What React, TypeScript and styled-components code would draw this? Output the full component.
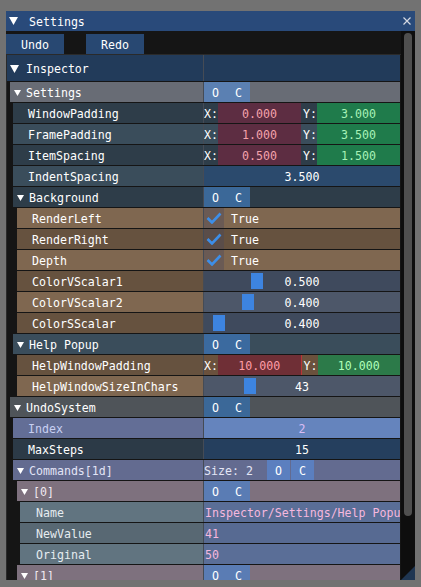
import React from "react";
import styled, { createGlobalStyle } from "styled-components";

const Global = createGlobalStyle`
  *, *::before, *::after { box-sizing: border-box; }
  html, body { margin: 0; padding: 0; background: #727272; }
  body {
    font-family: "DejaVu Sans Mono", "Liberation Mono", monospace;
    font-size: 11.6px;
    color: #ffffff;
  }
  #root { width: 421px; height: 587px; overflow: hidden; }
`;

const Page = styled.div`
  width: 421px;
  height: 587px;
  padding: 11px 6px 7px 6px;
`;

const Window = styled.div`
  position: relative;
  width: 409px;
  height: 569px;
  display: flex;
  flex-direction: column;
  background: #151515;
  overflow: hidden;
`;

const TitleBar = styled.div`
  flex: none;
  height: 20px;
  display: flex;
  align-items: center;
  padding-left: 3px;
  background: #294a7a;
`;

const TitleText = styled.span`
  line-height: 20px;
  padding-top: 1px;
`;

const CloseIcon = styled.svg`
  margin-left: auto;
  margin-right: 4px;
  flex: none;
`;

const Body = styled.div`
  flex: 1;
  min-height: 0;
  display: flex;
`;

const Main = styled.div`
  width: 395px;
  flex: none;
  display: flex;
  flex-direction: column;
  padding-top: 3px;
`;

const ButtonBar = styled.div`
  display: flex;
  gap: 22px;
  height: 20px;
  flex: none;
`;

const Btn = styled.div`
  width: 58px;
  height: 20px;
  background: #284872;
  display: flex;
  align-items: center;
  justify-content: center;
  padding-top: 1px;
`;

const Child = styled.div`
  flex: 1;
  min-height: 0;
  overflow: hidden;
  border-top: 1px solid #2a2a2a;
  border-left: 1px solid #2a2a2a;
  padding-right: 1px;
`;

const Table = styled.div`
  display: flex;
  flex-direction: column;
  gap: 1px;
`;

const Row = styled.div<{ $indent: number; $h?: number }>`
  display: flex;
  flex: none;
  height: ${(p) => p.$h ?? 20}px;
  margin-left: ${(p) => p.$indent}px;
`;

const Label = styled.div<{ $bg: string; $fg?: string; $pad: number }>`
  flex: 1;
  min-width: 0;
  display: flex;
  align-items: center;
  padding-left: ${(p) => p.$pad}px;
  padding-top: 1px;
  background: ${(p) => p.$bg};
  color: ${(p) => p.$fg ?? "#ffffff"};
  white-space: nowrap;
  overflow: hidden;
`;

const Divider = styled.div`
  width: 1px;
  flex: none;
  background: #454b55;
`;

const Value = styled.div<{ $bg: string; $fg?: string; $center?: boolean }>`
  position: relative;
  width: 196px;
  flex: none;
  display: flex;
  align-items: center;
  justify-content: ${(p) => (p.$center ? "center" : "flex-start")};
  background: ${(p) => p.$bg};
  color: ${(p) => p.$fg ?? "#ffffff"};
  white-space: nowrap;
  overflow: hidden;
`;

const ValueText = styled.span<{ $left?: number }>`
  position: relative;
  padding-top: 1px;
  margin-left: ${(p) => p.$left ?? 0}px;
`;

const ArrowSvg = styled.svg<{ $gap: number }>`
  flex: none;
  margin-right: ${(p) => p.$gap}px;
  fill: #ffffff;
`;

const MiniGroup = styled.div<{ $gap?: number; $left?: number }>`
  display: flex;
  height: 100%;
  gap: ${(p) => p.$gap ?? 0}px;
  margin-left: ${(p) => p.$left ?? 0}px;
`;

const MiniBtn = styled.div<{ $bg: string }>`
  width: 23px;
  height: 100%;
  display: flex;
  align-items: center;
  justify-content: center;
  padding-top: 1px;
  background: ${(p) => p.$bg};
`;

const SizeText = styled.span`
  width: 63px;
  flex: none;
  padding-top: 1px;
  color: #e4e6f6;
`;

const Axis = styled.span<{ $w: number; $bg: string }>`
  width: ${(p) => p.$w}px;
  height: 100%;
  flex: none;
  display: flex;
  align-items: center;
  justify-content: flex-end;
  padding-top: 1px;
  background: ${(p) => p.$bg};
`;

const NumField = styled.div<{ $bg: string; $fg: string; $edge?: string }>`
  flex: 1;
  height: 100%;
  display: flex;
  align-items: center;
  justify-content: center;
  padding-top: 1px;
  background: ${(p) => p.$bg};
  color: ${(p) => p.$fg};
  border-right: ${(p) => (p.$edge ? `1px solid ${p.$edge}` : "none")};
`;

const CheckBox = styled.div`
  width: 20px;
  height: 100%;
  flex: none;
  display: flex;
  align-items: center;
  justify-content: center;
  background: rgba(70, 70, 92, 0.36);
`;

const TrueText = styled.span`
  margin-left: 7px;
  padding-top: 1px;
`;

const Grab = styled.div<{ $pos: number }>`
  position: absolute;
  top: 2px;
  bottom: 2px;
  left: ${(p) => p.$pos}px;
  width: 12px;
  background: #3d84e0;
`;

const Track = styled.div`
  width: 14px;
  flex: none;
  background: #0e0e0e;
  padding: 2px 0 0 3px;
`;

const Thumb = styled.div`
  width: 8px;
  height: 483px;
  border-radius: 4px;
  background: #4f4f4f;
`;

const Grip = styled.svg`
  position: absolute;
  right: 0;
  bottom: 0;
`;

/* ---------- helpers ---------- */

const Arrow = ({ w, h, gap }: { w: number; h: number; gap: number }) => (
  <ArrowSvg $gap={gap} width={w} height={h} viewBox={`0 0 ${w} ${h}`}>
    <polygon points={`0,0 ${w},0 ${w / 2},${h}`} />
  </ArrowSvg>
);

const Check = () => (
  <CheckBox>
    <svg width="16" height="12" viewBox="0 0 16 12">
      <polyline
        points="1.5,6 6,10.5 14.5,1.5"
        fill="none"
        stroke="#3d8ee8"
        strokeWidth="2.6"
        strokeLinejoin="miter"
      />
    </svg>
  </CheckBox>
);

const OC = ({ bg, gap, left }: { bg: string; gap?: number; left?: number }) => (
  <MiniGroup $gap={gap} $left={left}>
    <MiniBtn $bg={bg}>O</MiniBtn>
    <MiniBtn $bg={bg}>C</MiniBtn>
  </MiniGroup>
);

type HeaderProps = {
  indent: number;
  bg: string;
  text: string;
  btn: string;
  fg?: string;
};

const HeaderRow = ({ indent, bg, text, btn, fg }: HeaderProps) => (
  <Row $indent={indent}>
    <Label $bg={bg} $pad={4} $fg={fg}>
      <Arrow w={7} h={6} gap={5} />
      {text}
    </Label>
    <Divider />
    <Value $bg={bg}>
      <OC bg={btn} />
    </Value>
  </Row>
);

type VecProps = {
  indent: number;
  text: string;
  bg: string;
  axis: string;
  red: string;
  redFg: string;
  green: string;
  greenFg: string;
  x: string;
  y: string;
  edge?: string;
};

const VecRow = (p: VecProps) => (
  <Row $indent={p.indent}>
    <Label $bg={p.bg} $pad={15}>
      {p.text}
    </Label>
    <Divider />
    <Value $bg={p.axis}>
      <Axis $w={14} $bg={p.axis}>X:</Axis>
      <NumField $bg={p.red} $fg={p.redFg} $edge={p.edge}>
        {p.x}
      </NumField>
      <Axis $w={16} $bg={p.axis}>Y:</Axis>
      <NumField $bg={p.green} $fg={p.greenFg}>
        {p.y}
      </NumField>
    </Value>
  </Row>
);

const BoolRow = ({ text, bg }: { text: string; bg: string }) => (
  <Row $indent={10}>
    <Label $bg={bg} $pad={15}>
      {text}
    </Label>
    <Divider />
    <Value $bg={bg}>
      <Check />
      <TrueText>True</TrueText>
    </Value>
  </Row>
);

const SliderRow = ({
  indent,
  text,
  bg,
  track,
  pos,
  value,
}: {
  indent: number;
  text: string;
  bg: string;
  track: string;
  pos: number;
  value: string;
}) => (
  <Row $indent={indent}>
    <Label $bg={bg} $pad={15}>
      {text}
    </Label>
    <Divider />
    <Value $bg={track} $center>
      <Grab $pos={pos} />
      <ValueText>{value}</ValueText>
    </Value>
  </Row>
);

const FieldRow = ({
  indent,
  text,
  bg,
  vbg,
  value,
  fg,
  vfg,
  center,
  pad = 15,
}: {
  indent: number;
  text: string;
  bg: string;
  vbg: string;
  value: string;
  fg?: string;
  vfg?: string;
  center?: boolean;
  pad?: number;
}) => (
  <Row $indent={indent}>
    <Label $bg={bg} $fg={fg} $pad={pad}>
      {text}
    </Label>
    <Divider />
    <Value $bg={vbg} $fg={vfg} $center={center}>
      <ValueText $left={center ? 0 : 1}>{value}</ValueText>
    </Value>
  </Row>
);

const SLATE_D = "#2e3d49";
const SLATE_L = "#3a4d5b";
const BROWN_L = "#7f6750";
const BROWN_D = "#66523f";
const MAUVE = "#7e717e";

export default function App() {
  return (
    <>
      <Global />
      <Page>
        <Window>
          <TitleBar>
            <Arrow w={9} h={8} gap={11} />
            <TitleText>Settings</TitleText>
            <CloseIcon width="8" height="8" viewBox="0 0 8 8">
              <path d="M0.5 0.5 L7.5 7.5 M7.5 0.5 L0.5 7.5" stroke="#d4d9e3" strokeWidth="1.2" />
            </CloseIcon>
          </TitleBar>
          <Body>
            <Main>
              <ButtonBar>
                <Btn>Undo</Btn>
                <Btn>Redo</Btn>
              </ButtonBar>
              <Child>
                <Table>
                  <Row $indent={0} $h={26}>
                    <Label $bg="#223b5a" $pad={3}>
                      <Arrow w={9} h={8} gap={7} />
                      Inspector
                    </Label>
                    <Divider />
                    <Value $bg="#223b5a" />
                  </Row>

                  <HeaderRow indent={3} bg="#686c75" text="Settings" btn="#5b80b2" />

                  <VecRow
                    indent={6}
                    text="WindowPadding"
                    bg={SLATE_D}
                    axis={SLATE_D}
                    red="#5d2d42"
                    redFg="#f5a3ad"
                    green="#1f7b4b"
                    greenFg="#a8f2b8"
                    x="0.000"
                    y="3.000"
                  />
                  <VecRow
                    indent={6}
                    text="FramePadding"
                    bg={SLATE_L}
                    axis={SLATE_L}
                    red="#5d2d42"
                    redFg="#f5a3ad"
                    green="#1f7b4b"
                    greenFg="#a8f2b8"
                    x="1.000"
                    y="3.500"
                  />
                  <VecRow
                    indent={6}
                    text="ItemSpacing"
                    bg={SLATE_D}
                    axis={SLATE_D}
                    red="#5d2d42"
                    redFg="#f5a3ad"
                    green="#1f7b4b"
                    greenFg="#a8f2b8"
                    x="0.500"
                    y="1.500"
                  />
                  <FieldRow
                    indent={6}
                    text="IndentSpacing"
                    bg={SLATE_L}
                    vbg="#2b4a6d"
                    value="3.500"
                    center
                  />

                  <HeaderRow indent={6} bg={SLATE_D} text="Background" btn="#3b6898" />
                  <BoolRow text="RenderLeft" bg={BROWN_L} />
                  <BoolRow text="RenderRight" bg={BROWN_D} />
                  <BoolRow text="Depth" bg={BROWN_L} />
                  <SliderRow indent={10} text="ColorVScalar1" bg={BROWN_D} track="#3f4a5d" pos={47} value="0.500" />
                  <SliderRow indent={10} text="ColorVScalar2" bg={BROWN_L} track="#4d5769" pos={38} value="0.400" />
                  <SliderRow indent={10} text="ColorSScalar" bg={BROWN_D} track="#3f4a5d" pos={9} value="0.400" />

                  <HeaderRow indent={6} bg={SLATE_L} text="Help Popup" btn="#3b6a9f" />
                  <VecRow
                    indent={10}
                    text="HelpWindowPadding"
                    bg={BROWN_D}
                    axis="#6a513d"
                    red="#6f2f36"
                    redFg="#ff9ea6"
                    green="#2c7a49"
                    greenFg="#b0ffba"
                    x="10.000"
                    y="10.000"
                    edge="#b83535"
                  />
                  <SliderRow
                    indent={10}
                    text="HelpWindowSizeInChars"
                    bg={BROWN_L}
                    track="#4d5769"
                    pos={40}
                    value="43"
                  />

                  <HeaderRow indent={3} bg="#4f5459" text="UndoSystem" btn="#3b6898" />
                  <FieldRow
                    indent={6}
                    text="Index"
                    bg="#636e96"
                    fg="#c8d0f2"
                    vbg="#6584bd"
                    vfg="#d9bcf4"
                    value="2"
                    center
                  />
                  <FieldRow indent={6} text="MaxSteps" bg="#2c3a47" vbg="#253f5e" value="15" center />

                  <Row $indent={6}>
                    <Label $bg="#636b90" $fg="#e2e4f6" $pad={4}>
                      <Arrow w={7} h={6} gap={5} />
                      Commands[1d]
                    </Label>
                    <Divider />
                    <Value $bg="#636b90">
                      <SizeText>Size: 2</SizeText>
                      <OC bg="#5b7fbf" gap={1} />
                    </Value>
                  </Row>

                  <HeaderRow indent={10} bg={MAUVE} text="[0]" btn="#5a7cb4" fg="#f0e8f0" />
                  <FieldRow
                    indent={13}
                    text="Name"
                    bg="#617480"
                    fg="#e6ecf0"
                    vbg="#5a6e97"
                    vfg="#f6b8de"
                    value="Inspector/Settings/Help Popup"
                    pad={16}
                  />
                  <FieldRow
                    indent={13}
                    text="NewValue"
                    bg="#586873"
                    fg="#e6ecf0"
                    vbg="#576a92"
                    vfg="#f6b8de"
                    value="41"
                    pad={16}
                  />
                  <FieldRow
                    indent={13}
                    text="Original"
                    bg="#617480"
                    fg="#e6ecf0"
                    vbg="#5a6e97"
                    vfg="#f6b8de"
                    value="50"
                    pad={16}
                  />
                  <HeaderRow indent={10} bg={MAUVE} text="[1]" btn="#5a7cb4" fg="#f0e8f0" />
                </Table>
              </Child>
            </Main>
            <Track>
              <Thumb />
            </Track>
          </Body>
          <Grip width="14" height="14" viewBox="0 0 14 14">
            <polygon points="14,0 14,14 0,14" fill="#1f3652" />
          </Grip>
        </Window>
      </Page>
    </>
  );
}
